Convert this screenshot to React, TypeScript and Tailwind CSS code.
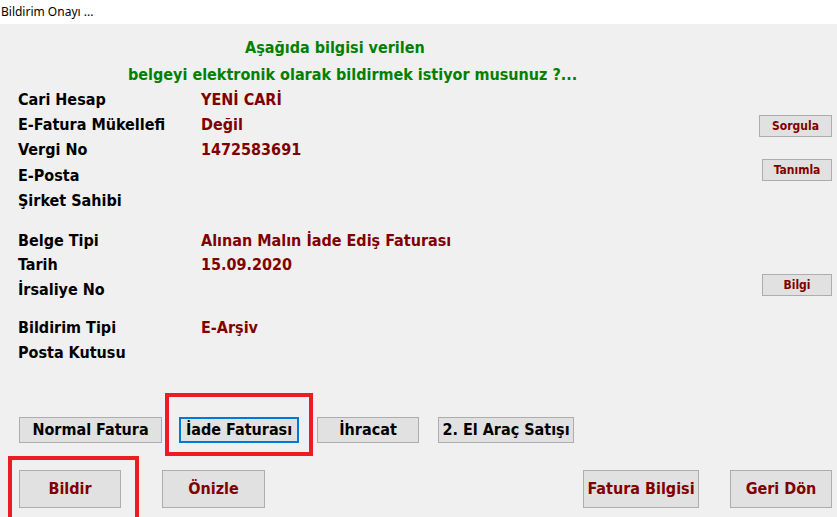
import type { ReactNode } from 'react';

const font = { fontFamily: '"DejaVu Sans Condensed", "DejaVu Sans", sans-serif' };

function Row({ label, value, h, className = '' }: { label: string; value?: string; h: string; className?: string }) {
    return (
        <div className={`flex items-center pt-[1px] ${h} ${className}`}>
            <div className="w-[183px] text-black">{label}</div>
            <div className="text-[#800000]">{value}</div>
        </div>
    );
}

function Btn({ children, className = '' }: { children: ReactNode; className?: string }) {
    return (
        <div className={`flex items-center justify-center border border-[#adadad] bg-[#e1e1e1] ${className}`}>
            {children}
        </div>
    );
}

export default function App() {
    return (
        <div className="w-[837px] h-[517px] overflow-hidden bg-[#f0f0f0] relative">
            {/* Title bar */}
            <div className="h-[24px] bg-white flex items-center pl-[1px] text-[12px] text-black" style={{ fontFamily: '"Noto Sans", sans-serif' }}>
                Bildirim Onayı ...
            </div>

            <div className="font-bold text-[16px]" style={font}>
                {/* Info section */}
                <div className="flex pt-[10px]">
                    <div className="flex-1 pl-[18px]">
                        <div className="h-[27px] flex items-center pt-[1px] pl-[227px] text-[#008000]">Aşağıda bilgisi verilen</div>
                        <div className="h-[26px] flex items-center pt-[1px] pl-[110px] text-[#008000]">
                            belgeyi elektronik olarak bildirmek istiyor musunuz ?...
                        </div>
                        <Row label="Cari Hesap" value="YENİ CARİ" h="h-[25px]" />
                        <Row label="E-Fatura Mükellefi" value="Değil" h="h-[24px]" />
                        <Row label="Vergi No" value="1472583691" h="h-[26px]" />
                        <Row label="E-Posta" h="h-[26px]" />
                        <Row label="Şirket Sahibi" h="h-[25px]" />
                        <Row label="Belge Tipi" value="Alınan Malın İade Ediş Faturası" h="h-[24px]" className="mt-[15px]" />
                        <Row label="Tarih" value="15.09.2020" h="h-[25px]" />
                        <Row label="İrsaliye No" h="h-[25px]" />
                        <Row label="Bildirim Tipi" value="E-Arşiv" h="h-[25px]" className="mt-[13px]" />
                        <Row label="Posta Kutusu" h="h-[25px]" />
                    </div>
                    <div className="flex flex-col items-end pr-[5px] text-[12px] text-[#800000]">
                        <Btn className="mt-[81px] w-[73px] h-[22px]">Sorgula</Btn>
                        <Btn className="mt-[22px] w-[70px] h-[22px]">Tanımla</Btn>
                        <Btn className="mt-[93px] w-[70px] h-[22px]">Bilgi</Btn>
                    </div>
                </div>

                {/* Invoice type buttons */}
                <div className="flex items-center mt-[52px] pl-[19px] h-[26px] text-black">
                    <Btn className="w-[143px] h-[26px]">Normal Fatura</Btn>
                    <div className="ml-[17px] w-[120px] h-[26px] flex items-center justify-center border-2 border-[#0078d7] bg-[#e1e1e1]">
                        İade Faturası
                    </div>
                    <Btn className="ml-[18px] w-[102px] h-[26px]">İhracat</Btn>
                    <Btn className="ml-[19px] w-[136px] h-[26px]">2. El Araç Satışı</Btn>
                </div>

                {/* Action buttons */}
                <div className="flex items-center mt-[27px] px-[5px] pl-[19px] text-[#800000]">
                    <Btn className="w-[102px] h-[38px]">Bildir</Btn>
                    <Btn className="ml-[41px] w-[103px] h-[38px]">Önizle</Btn>
                    <div className="flex-1" />
                    <Btn className="w-[116px] h-[38px]">Fatura Bilgisi</Btn>
                    <Btn className="ml-[31px] w-[102px] h-[38px]">Geri Dön</Btn>
                </div>
            </div>

            {/* Annotation frames */}
            <div className="absolute left-[165px] top-[393px] w-[148px] h-[63px] border-4 border-[#ed1c24]" />
            <div className="absolute left-[8px] top-[456px] w-[131px] h-[70px] border-4 border-[#ed1c24]" />
        </div>
    );
}
